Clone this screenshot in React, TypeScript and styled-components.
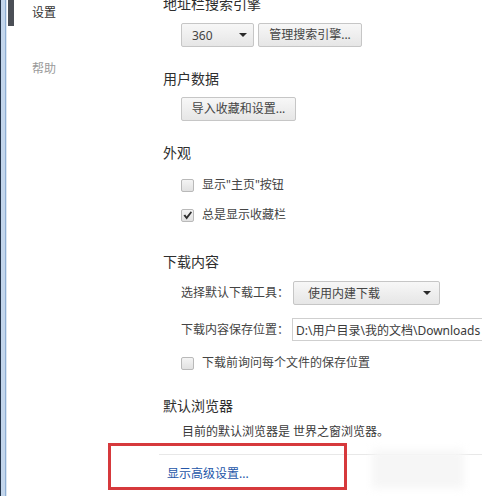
import React from "react";
import styled, { createGlobalStyle } from "styled-components";

const Global = createGlobalStyle`
  html, body { margin: 0; padding: 0; background: #fff; }
  body {
    width: 482px;
    height: 496px;
    overflow: hidden;
    font-family: "Noto Sans", "Noto Sans CJK SC", sans-serif;
    -webkit-font-smoothing: antialiased;
  }
  * { box-sizing: border-box; }
`;

const Page = styled.div`
  display: flex;
  width: 482px;
  height: 496px;
  overflow: hidden;
  background: #fff;
`;

const FrameEdge = styled.div`
  flex: 0 0 7px;
  height: 100%;
  background: linear-gradient(
    to right,
    #23344a 0,
    #23344a 1px,
    #c3d6ec 1px,
    #c3d6ec 5px,
    #8eaed3 5px,
    #8eaed3 6px,
    #dce7f3 6px,
    #dce7f3 7px
  );
`;

const ScrollThumb = styled.div`
  flex: 0 0 6px;
  height: 26px;
  margin-left: 1px;
  background: #4b4f56;
`;

const Nav = styled.nav`
  flex: 0 0 149px;
  padding-left: 18px;
  display: flex;
  flex-direction: column;
`;

const NavItem = styled.div<{ $active?: boolean; $mt: number }>`
  margin-top: ${(p) => p.$mt}px;
  font-size: 12px;
  line-height: 20px;
  color: ${(p) => (p.$active ? "#333" : "#9a9a9a")};
`;

const Main = styled.main`
  flex: 1 1 auto;
  min-width: 0;
  display: flex;
  flex-direction: column;
`;

const Heading = styled.h3<{ $mt: number }>`
  margin: ${(p) => p.$mt}px 0 0 0;
  font-size: 14px;
  line-height: 20px;
  font-weight: normal;
  color: #2e2e2e;
`;

const Row = styled.div<{ $mt: number; $h?: number }>`
  margin-top: ${(p) => p.$mt}px;
  padding-left: 18px;
  height: ${(p) => p.$h ?? 20}px;
  display: flex;
  align-items: center;
  gap: 4px;
  white-space: nowrap;
`;

const Button = styled.button<{ $w: number }>`
  flex: 0 0 ${(p) => p.$w}px;
  height: 24px;
  padding: 0;
  border: 1px solid #c6c6c6;
  border-radius: 2px;
  background: linear-gradient(#f7f7f7, #e6e6e6);
  font-family: inherit;
  font-size: 12px;
  line-height: 22px;
  color: #444;
  text-align: center;
`;

const SelectBox = styled.div<{ $w: number; $pl: number; $pr: number }>`
  flex: 0 0 ${(p) => p.$w}px;
  height: 24px;
  padding: 0 ${(p) => p.$pr}px 0 ${(p) => p.$pl}px;
  border: 1px solid #c6c6c6;
  border-radius: 2px;
  background: linear-gradient(#f7f7f7, #e6e6e6);
  display: flex;
  align-items: center;
  justify-content: space-between;
  font-size: 12px;
  color: #444;
`;

const Arrow = styled.span`
  width: 0;
  height: 0;
  border-left: 4px solid transparent;
  border-right: 4px solid transparent;
  border-top: 4px solid #2a2a2a;
`;

const Label = styled.span`
  font-size: 12px;
  line-height: 20px;
  color: #444;
`;

const FieldLabel = styled(Label)`
  flex: 0 0 105px;
`;

const PathInput = styled.div`
  flex: 0 0 210px;
  height: 23px;
  margin-left: -1px;
  padding-left: 3px;
  border: 1px solid #cfcfcf;
  background: #fff;
  display: flex;
  align-items: center;
  font-size: 12px;
  color: #3a3a3a;
`;

const CheckRow = styled(Row)`
  gap: 8px;
`;

const Box = styled.span`
  flex: 0 0 13px;
  height: 13px;
  border: 1px solid #b9b9b9;
  border-radius: 2px;
  background: linear-gradient(#f4f4f4, #e1e1e1);
  display: flex;
  align-items: center;
  justify-content: center;
`;

const Text = styled.div<{ $mt: number }>`
  margin-top: ${(p) => p.$mt}px;
  padding-left: 19px;
  font-size: 12px;
  line-height: 20px;
  color: #3a3a3a;
`;

const Footer = styled.footer`
  position: relative;
  margin-top: 12px;
  margin-left: -4px;
  border-top: 1px solid #e8e8e8;
  padding: 6px 0 0 8px;
`;

const Link = styled.a`
  font-size: 12px;
  line-height: 20px;
  color: #2456a8;
  text-decoration: none;
`;

const Highlight = styled.div`
  position: absolute;
  left: -51px;
  top: -12px;
  width: 239px;
  height: 47px;
  border: 3px solid #d6393c;
  pointer-events: none;
`;

const Smudge = styled.div`
  position: absolute;
  left: 213px;
  top: -5px;
  width: 92px;
  height: 38px;
  background: #f6f6f6;
  filter: blur(4px);
  pointer-events: none;
`;

const Check = () => (
  <svg width="11" height="11" viewBox="0 0 11 11">
    <path d="M1.5 5.6 L3.2 4.4 L4.6 6.4 L8.8 1.2 L10 2.4 L4.7 9.4 Z" fill="#2f2f2f" />
  </svg>
);

const Checkbox = ({ checked, label, mt }: { checked?: boolean; label: string; mt: number }) => (
  <CheckRow $mt={mt}>
    <Box>{checked && <Check />}</Box>
    <Label>{label}</Label>
  </CheckRow>
);

export default function App() {
  return (
    <>
      <Global />
      <Page>
        <FrameEdge />
        <ScrollThumb />
        <Nav>
          <NavItem $active $mt={3}>设置</NavItem>
          <NavItem $mt={36}>帮助</NavItem>
        </Nav>
        <Main>
          <Heading $mt={-6}>地址栏搜索引擎</Heading>
          <Row $mt={9} $h={24}>
            <SelectBox $w={73} $pl={10} $pr={6}>
              <span>360</span>
              <Arrow />
            </SelectBox>
            <Button $w={104}>管理搜索引擎...</Button>
          </Row>

          <Heading $mt={22}>用户数据</Heading>
          <Row $mt={8} $h={24}>
            <Button $w={115}>导入收藏和设置...</Button>
          </Row>

          <Heading $mt={22}>外观</Heading>
          <Checkbox mt={12} label={'显示"主页"按钮'} />
          <Checkbox mt={10} checked label="总是显示收藏栏" />

          <Heading $mt={27}>下载内容</Heading>
          <Row $mt={9} $h={24}>
            <FieldLabel>选择默认下载工具：</FieldLabel>
            <SelectBox $w={147} $pl={14} $pr={8}>
              <span>使用内建下载</span>
              <Arrow />
            </SelectBox>
          </Row>
          <Row $mt={13} $h={23}>
            <FieldLabel>下载内容保存位置：</FieldLabel>
            <PathInput>{"D:\\用户目录\\我的文档\\Downloads"}</PathInput>
          </Row>
          <Checkbox mt={12} label="下载前询问每个文件的保存位置" />

          <Heading $mt={23}>默认浏览器</Heading>
          <Text $mt={6}>目前的默认浏览器是 世界之窗浏览器。</Text>

          <Footer>
            <Link href="#">显示高级设置...</Link>
            <Smudge />
            <Highlight />
          </Footer>
        </Main>
      </Page>
    </>
  );
}
